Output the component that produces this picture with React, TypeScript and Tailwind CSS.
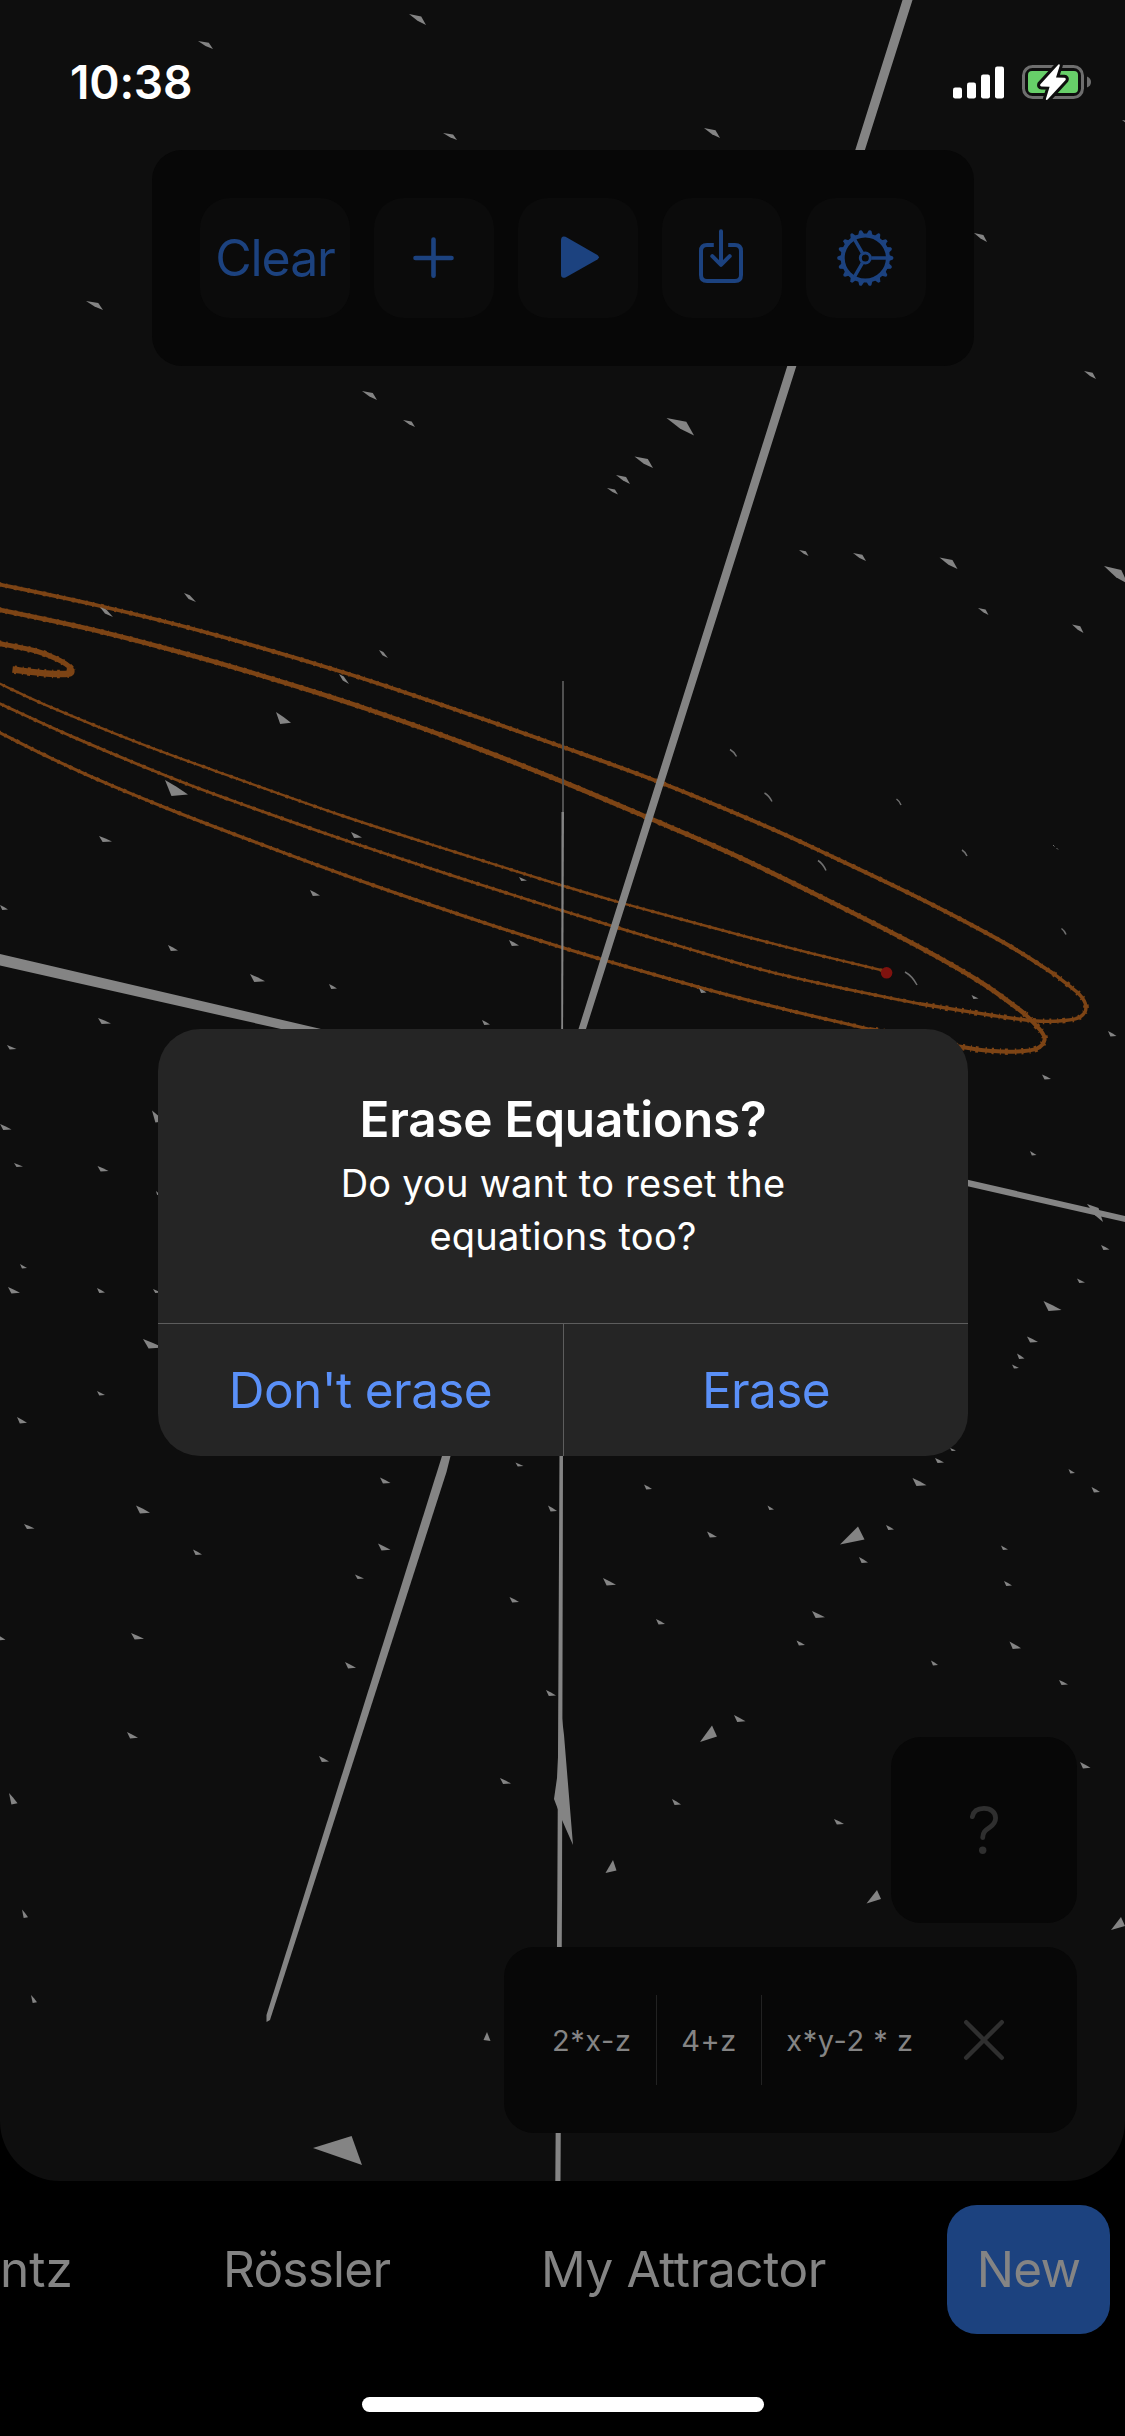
import React from "react";

type Mark = [number, number, number, number];
type Pt = [number, number];

const LINE = "#848484";
const TRAIL = "#7d4415";

// Vector-field arrows seen from behind: thin tip on the left, heel on the right.
const upperMarks: Mark[] = [
  [409, 14, 17, 11], [198, 41, 15, 8], [443, 133, 14, 7], [704, 128, 16, 10],
  [974, 233, 13, 9], [86, 301, 17, 9], [1084, 371, 12, 8], [362, 391, 15, 9],
  [403, 420, 12, 7], [666.5, 418, 27.5, 17.5], [634.5, 456.5, 18.5, 11.5],
  [616, 475, 14, 9], [607, 488, 11, 6.5], [799, 550, 9.5, 6], [853, 553, 13, 8],
  [939.5, 557.5, 18, 11.5], [978, 608, 10.5, 7], [1072, 624.5, 11.5, 8.5],
  [1104, 566, 24, 18], [1087, 1204, 16, 18], [1122, 120, 8, 5],
];

// Arrows turning sideways to the camera.
const slimMarks: Mark[] = [
  [184, 593, 12, 9], [100, 607, 13, 10], [379, 650, 9, 8], [339, 674, 10, 10],
];

// Arrows facing the viewer: heel on the left, thin tip on the right.
const lowerMarks: Mark[] = [
  [276, 712, 15, 12], [165, 780, 23, 16], [99, 836, 13, 6], [351, 832, 11, 6],
  [310, 890, 10, 6], [519, 877, 8, 4], [509, 940, 10, 6], [0, 905, 8, 5],
  [168, 945, 10, 6], [250, 974, 15, 8], [329, 984, 8, 5], [98, 1018, 13, 6],
  [482, 1020, 8, 5], [971.5, 995, 7, 4], [699, 988, 7.5, 5], [1108, 1031, 8.5, 5.5],
  [7, 1045, 9.5, 4.5], [0, 1124, 11.5, 6], [14, 1163, 9, 4], [97.5, 1166, 11, 5.5],
  [152, 1110.5, 12, 12], [156, 1191, 4, 4], [20, 1264, 7, 4.5], [8, 1287, 12, 6.5],
  [97, 1288, 8, 5], [153, 1289, 8, 4], [143, 1339, 20, 9.5], [97, 1391, 8, 4.5],
  [17, 1417, 10, 6.5], [24, 1524, 10.5, 5], [136, 1505.5, 14, 8], [193, 1549.5, 9, 5.5],
  [380, 1477.5, 10.5, 6], [515.5, 1462.5, 8, 4], [378, 1543.5, 12.5, 7],
  [355, 1574.5, 9, 4.5], [548, 1505.5, 9, 6], [509.5, 1597, 9.5, 5.5],
  [-4, 1634, 9.5, 6.5], [131, 1633, 13, 6.5], [345, 1662, 11, 6.5], [546, 1690, 10, 6],
  [127, 1732, 11, 6.5], [319, 1756, 10, 6], [500, 1778, 11, 6], [9, 1793, 8.5, 11.5],
  [22, 1909.5, 6, 8.5], [31, 1995, 6, 8], [644, 1484.5, 8, 5], [707, 1531.5, 10, 6],
  [767.5, 1505.5, 6.5, 4.5], [912.5, 1478, 14, 8], [935, 1458, 9, 5],
  [1068.5, 1469, 6.5, 4.5], [1091.5, 1487, 8.5, 5.5], [886, 1525, 8, 5],
  [859, 1557, 9, 6], [603, 1578, 13, 7.5], [656, 1619, 9, 5.5], [812, 1611, 13, 7],
  [796.5, 1640.5, 8.5, 5], [1001, 1545.5, 7, 4.5], [1004, 1581, 8, 5],
  [1009.5, 1641.5, 11.5, 7.5], [931, 1660.5, 7, 5], [1059, 1680, 9, 5],
  [734, 1715, 11.5, 7], [672, 1799, 9, 6], [834, 1819, 10, 5.5], [1080, 1762, 10.5, 6.5],
  [1042, 1074.5, 9, 5], [1030, 1151, 6.5, 4.5], [1101, 1245, 8.5, 5],
  [1077, 1278.5, 8, 4.5], [1043.5, 1301, 18, 10], [1027, 1336.5, 11, 6],
  [1017, 1353.5, 7.5, 5.5], [1012, 1364.5, 7, 4], [950, 1448, 6, 3],
];

// Arrows almost edge-on to the camera.
const edgeMarks: Mark[] = [
  [730, 749.5, 6.5, 7], [764.5, 793, 7.5, 8.5], [896.5, 799, 4.5, 6],
  [818, 860.5, 8, 10], [962, 850, 5, 6], [1061.5, 928.5, 4.5, 6], [905, 972, 12, 13],
];

const nearMarks = [
  "313,2148 351.6,2136 362,2165",
  "840,1544.5 858,1526.5 864.5,1539.5",
  "700,1742 712,1725.5 717,1736.5",
  "605.5,1873 613,1860 616.5,1870.5",
  "866.5,1903.5 877,1890 881,1899",
  "1111,1930 1121,1917 1125,1926",
  "483.5,2040 487,2032 490.5,2041",
];

const outerTrail: Pt[] = [
  [-30, 579], [0, 584.6], [100, 606], [201, 631], [339, 671], [448, 707], [562, 746.7],
  [659, 782], [763, 825], [831, 856], [921, 899], [1003.7, 942.5], [1054, 974],
  [1079, 994], [1086, 1007], [1080, 1017], [1064.7, 1020.5], [1036, 1021], [993, 1015.5],
  [921, 1004], [849, 989.6], [763, 970], [659, 940], [562, 910.5], [451.6, 875.3],
  [338.7, 838], [229, 799.5], [166.7, 776], [71.7, 736.4], [0, 703.8], [-30, 690],
];
const middleTrail: Pt[] = [
  [-30, 605], [0, 610], [100, 631.5], [201, 658], [294, 685.5], [369, 709.6], [466, 744],
  [562, 781.5], [648, 817.7], [730.8, 853.4], [820.5, 896.7], [917.5, 946], [982, 983],
  [1025, 1014], [1041, 1031], [1044.5, 1040], [1037, 1048.5], [1018, 1051.5],
  [993, 1051], [962, 1047], [870.8, 1029.3], [791.8, 1011], [702, 988], [562, 947.5],
  [455, 913], [358.4, 880], [251, 840.5], [166.7, 808.2], [96.8, 779.2], [46.6, 756],
  [0, 732.8], [-30, 718],
];
const headTrail: Pt[] = [
  [-30, 670], [0, 683.8], [43, 703.8], [136, 741.8], [215, 770.8], [338.7, 814.5],
  [455, 852], [562, 885.5], [623, 903.3], [738, 934.5], [810, 953], [885, 971],
];
const coreTrail: Pt[] = [
  [-30, 638], [0, 643.6], [36, 651], [58, 659.5], [71, 668.5], [69, 673.5], [46.6, 673.5], [12.5, 669.5],
];

// Catmull-Rom spline through the sampled trajectory.
function spline(p: Pt[]): string {
  let d = `M${p[0][0]} ${p[0][1]}`;
  for (let i = 0; i < p.length - 1; i++) {
    const a = p[Math.max(0, i - 1)];
    const b = p[i];
    const c = p[i + 1];
    const e = p[Math.min(p.length - 1, i + 2)];
    d += `C${b[0] + (c[0] - a[0]) / 6} ${b[1] + (c[1] - a[1]) / 6} ${c[0] - (e[0] - b[0]) / 6} ${c[1] - (e[1] - b[1]) / 6} ${c[0]} ${c[1]}`;
  }
  return d;
}

function Trail({ points, width, rough = 1 }: { points: Pt[]; width: number; rough?: number }) {
  const d = spline(points);
  return (
    <g fill="none" stroke={TRAIL}>
      <path d={d} strokeWidth={width} />
      <path d={d} strokeWidth={width + rough} strokeDasharray="2 5 1.5 7 3 4 1 6" />
    </g>
  );
}

function Scene() {
  return (
    <svg className="absolute inset-0" width="1125" height="2181" viewBox="0 0 1125 2181" aria-hidden="true">
      <Trail points={outerTrail.slice(0, 13)} width={3.8} />
      <Trail points={outerTrail.slice(12, 20)} width={3.4} rough={2.2} />
      <Trail points={outerTrail.slice(19)} width={2.8} />
      <Trail points={middleTrail.slice(0, 14)} width={4.6} />
      <Trail points={middleTrail.slice(13, 21)} width={4} rough={2.4} />
      <Trail points={middleTrail.slice(20)} width={3.1} />
      <Trail points={headTrail} width={2.4} />
      <Trail points={coreTrail.slice(0, 6)} width={5} rough={1.4} />
      <Trail points={coreTrail.slice(4)} width={6.5} rough={2} />
      <g fill={LINE}>
        <polygon points="902.5,0 912.5,0 586,1029 568,1084 561,1084 578.5,1029" />
        <polygon points="442,1456 450.5,1456 446.5,1472 270,2020 266.5,2022 266.5,2015" />
        <polygon points="0,954 321,1029 321,1040 281,1029 0,965.5" />
        <polygon points="960,1178 1125,1216 1125,1222 960,1184.5" />
        <rect x="562" y="681" width="2" height="131" fill="#505050" />
        <polygon points="561.5,812 564,812 563,1040 561.2,1040" />
        <polygon points="559.5,1450 563,1450 562,1900 560.5,2181 555.3,2181 557.3,1900" />
        <polygon points="560.5,1706 564,1735 573,1845 562,1820 554,1799 557,1778" />
        {upperMarks.map(([x, y, w, h], i) => (
          <path key={i} d={`M${x} ${y}L${x + w * 0.72} ${y + h * 0.22}L${x + w} ${y + h}L${x + w * 0.5} ${y + h * 0.62}Z`} />
        ))}
        {slimMarks.map(([x, y, w, h], i) => (
          <path key={i} d={`M${x} ${y}L${x + w * 0.48} ${y + h * 0.26}L${x + w} ${y + h}L${x + w * 0.38} ${y + h * 0.66}Z`} />
        ))}
        {lowerMarks.map(([x, y, w, h], i) => (
          <path key={i} d={`M${x} ${y}L${x + w * 0.5} ${y + h * 0.42}L${x + w} ${y + h * 0.9}L${x + w * 0.28} ${y + h}Z`} />
        ))}
        {nearMarks.map((p) => (
          <polygon key={p} points={p} />
        ))}
      </g>
      <g fill="none" stroke="#707070" strokeWidth="1.5">
        {edgeMarks.map(([x, y, w, h], i) => (
          <path key={i} d={`M${x} ${y}Q${x + w * 0.6} ${y + h * 0.3} ${x + w} ${y + h}`} />
        ))}
        <path d="M1053 845l1.500 1.500M1056.500 848l1.500 1.500" strokeWidth="1" />
      </g>
      <circle cx="886.6" cy="972.8" r="5.8" fill="#7f120e" />
    </svg>
  );
}

function Signal() {
  return (
    <svg width="51" height="33" viewBox="0 0 51 33" fill="#fff">
      <rect x="0" y="21.5" width="9" height="11" rx="2.2" />
      <rect x="14" y="16.5" width="9" height="16" rx="2.2" />
      <rect x="28" y="8.5" width="9" height="24" rx="2.2" />
      <rect x="42" y="0.5" width="9" height="32" rx="2.2" />
    </svg>
  );
}

function Battery() {
  const bolt = "M38.4 2.6L20.2 22.4Q19.6 24.4 21.6 24.6L29.6 24.8L25.8 37.2Q26.2 38.6 27.6 37.6L45.6 18Q46.4 16 44.2 15.8L36 15.4L39.8 3.4Q39.6 1.6 38.4 2.6Z";
  return (
    <svg width="72" height="40" viewBox="0 0 72 40">
      <rect x="3.5" y="4.5" width="59" height="31" rx="9" fill="none" stroke="#6e6e6e" strokeWidth="3" />
      <path d="M67 14.5Q71 16 71 20T67 25.5Z" fill="#6e6e6e" />
      <rect x="8" y="9" width="50" height="22" rx="4" fill="#67cf69" />
      <path d={bolt} fill="#fff" stroke="#0e0e0e" strokeWidth="6" strokeLinejoin="round" />
      <path d={bolt} fill="#fff" />
    </svg>
  );
}

function PlusIcon() {
  return (
    <svg width="42" height="42" viewBox="0 0 42 42" fill="none" stroke="currentColor" strokeWidth="4.6" strokeLinecap="round">
      <path d="M20.500 2.500V38.700M2.500 21H38.500" />
    </svg>
  );
}

function PlayIcon() {
  return (
    <svg width="60" height="60" viewBox="0 0 60 60" fill="currentColor">
      <path d="M13 12.500Q13 7.500 17.500 8.800L49.400 27Q52.400 29.300 49.400 31.400L17.500 49.500Q13 51 13 46Z" />
    </svg>
  );
}

function SaveIcon() {
  return (
    <svg width="60" height="60" viewBox="0 0 60 60" fill="none" stroke="currentColor" strokeWidth="4">
      <path d="M21.800 17H15Q9 17 9 23V47Q9 53 15 53H43Q49 53 49 47V23Q49 17 43 17H36.200" />
      <path d="M29 3.300V36.500M20.300 28.200L29 36.800L37.700 28.200" strokeLinecap="round" strokeLinejoin="round" />
    </svg>
  );
}

function GearIcon() {
  const teeth = Array.from({ length: 18 }, (_, i) => i * 20);
  return (
    <svg width="60" height="60" viewBox="-29.3 -30 60 60" fill="none" stroke="currentColor">
      <circle r="22.6" strokeWidth="4" />
      <circle r="5" strokeWidth="3" />
      <path d="M6 0H21M-3 -5.2L-10.5 -18.2M-3 5.2L-10.5 18.2" strokeWidth="3.4" />
      {teeth.map((t) => (
        <path key={t} d="M22.500 -3.600L27.600 -1.400Q28.800 0 27.600 1.400L22.500 3.600Z" fill="currentColor" stroke="none" transform={`rotate(${t})`} />
      ))}
    </svg>
  );
}

function ToolButton({ children, label }: { children: React.ReactNode; label: string }) {
  return (
    <button aria-label={label} className="flex size-[120px] items-center justify-center rounded-[30px] bg-[#0b0b0b]">
      {children}
    </button>
  );
}

export default function App() {
  return (
    <div className="relative flex h-[2436px] w-[1125px] flex-col overflow-hidden bg-black font-[Inter,sans-serif]">
      <main className="relative flex h-[2181px] shrink-0 flex-col overflow-hidden rounded-b-[60px] bg-[#0e0e0e]">
        <Scene />
        <header className="relative flex h-[150px] shrink-0 items-start justify-between pt-[53px] pr-[33px] pl-[70px] text-white">
          <span className="text-[46px] leading-[58px] font-semibold tracking-[-0.2px]">10:38</span>
          <div className="flex items-center gap-4 pt-[9px]">
            <Signal />
            <Battery />
          </div>
        </header>

        <nav className="relative ml-[152px] flex h-[216px] w-[822px] shrink-0 gap-6 rounded-[30px] bg-[#070707] p-12 text-[#1c427f]">
          <button className="flex h-[120px] w-[150px] items-center justify-center rounded-[30px] bg-[#0b0b0b] text-[50px] tracking-[-1.1px]">
            Clear
          </button>
          <ToolButton label="Add"><PlusIcon /></ToolButton>
          <ToolButton label="Play"><PlayIcon /></ToolButton>
          <ToolButton label="Save"><SaveIcon /></ToolButton>
          <ToolButton label="Settings"><GearIcon /></ToolButton>
        </nav>

        <div className="relative mt-auto mr-12 mb-12 flex flex-col items-end gap-6 text-[#2f2f2f]">
          <button aria-label="Help" className="flex size-[186px] items-center justify-center rounded-[30px] bg-[#070707]">
            <svg width="60" height="60" viewBox="0 0 60 60" fill="none" stroke="currentColor" strokeWidth="4.8" strokeLinecap="round">
              <path d="M18.400 16.600C19.500 11 24 8.400 30 8.400C37 8.400 41.600 12.500 41.600 18C41.600 22.500 39.500 24.800 35.500 27.500C31 30.500 28.800 32.500 28.700 37.600" />
              <circle cx="28.700" cy="50.300" r="3.700" fill="currentColor" stroke="none" />
            </svg>
          </button>
          <div className="flex h-[186px] w-[573px] items-center rounded-[30px] bg-[#070707] pl-12 text-[29px] tracking-[0.55px] whitespace-nowrap text-[#848484]">
            <span className="w-[79px] pt-[2px] text-center">2*x-z</span>
            <i className="ml-[25px] h-[90px] w-px bg-[#222222]" />
            <span className="w-[104px] pt-[2px] text-center">4+z</span>
            <i className="h-[90px] w-px bg-[#222222]" />
            <span className="w-[176px] pt-[2px] text-center">x*y-2 * z</span>
            <svg className="ml-[21px] text-[#2f2f2f]" width="50" height="50" viewBox="0 0 50 50" fill="none" stroke="currentColor" strokeWidth="4.4" strokeLinecap="round">
              <path d="M7.200 7.200L42.800 42.800M42.800 7.200L7.200 42.800" />
            </svg>
          </div>
        </div>
      </main>

      <footer className="flex h-[177px] shrink-0 items-center text-[49.5px] tracking-[-0.75px] whitespace-nowrap text-[#848484]">
        <span className="w-[223px] tracking-[0px]">ntz</span>
        <span className="w-[318px]">Rössler</span>
        <span className="w-[406px] tracking-[-0.4px]">My Attractor</span>
        <span className="flex h-[129px] w-[163px] items-center justify-center rounded-[30px] bg-[#1c427f]">New</span>
      </footer>
      <div className="mx-auto mt-[39px] h-[15px] w-[402px] rounded-full bg-white" />

      <div role="alertdialog" className="absolute top-[1029px] left-[158px] flex h-[427px] w-[810px] flex-col overflow-hidden rounded-[42px] bg-[#252525] text-center text-white">
        <div className="flex h-[294px] flex-col items-center pt-[59px]">
          <h1 className="text-[49.5px] leading-[62px] font-semibold tracking-[-0.25px]">Erase Equations?</h1>
          <p className="mt-[7px] w-[560px] text-[38px] leading-[53px] tracking-[0.23px]">Do you want to reset the equations too?</p>
        </div>
        <div className="flex flex-1 border-t border-[#5d5d5d] text-[49.5px] tracking-[-0.6px] text-[#5a90f8]">
          <button className="w-[405px]">Don't erase</button>
          <button className="flex-1 border-l border-[#5d5d5d]">Erase</button>
        </div>
      </div>
    </div>
  );
}
